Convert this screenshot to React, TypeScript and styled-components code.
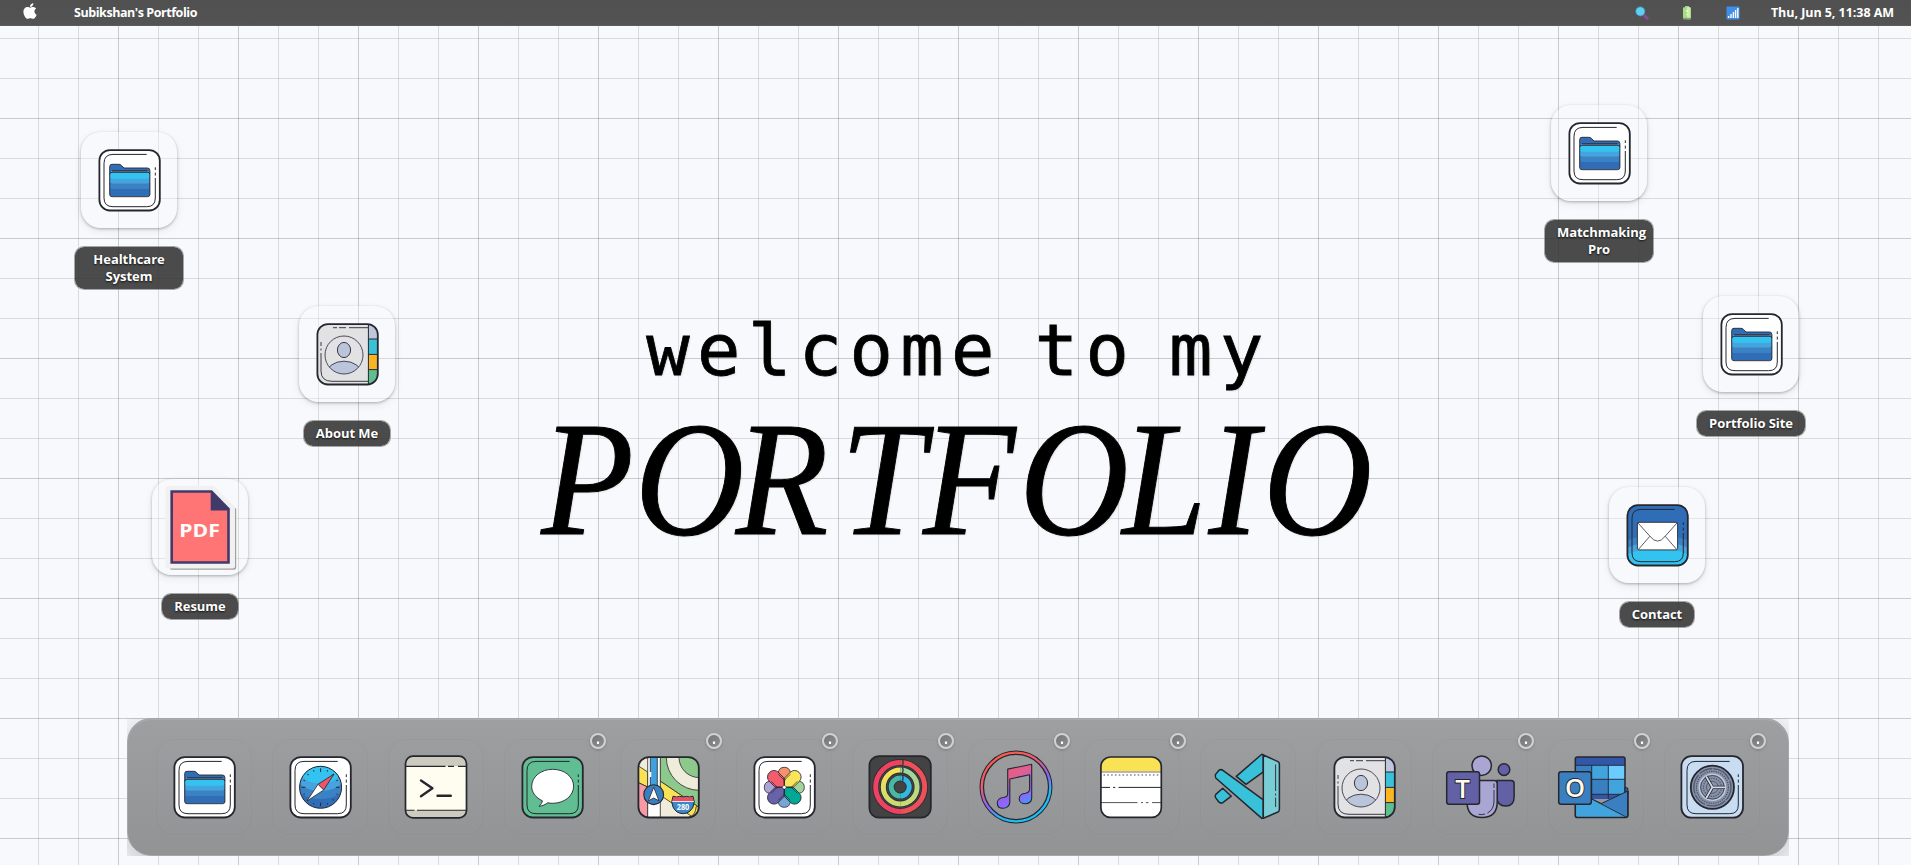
import React from "react";
import styled, { createGlobalStyle } from "styled-components";
import { FaApple } from "react-icons/fa";

const INK = "#26262f";

const GlobalStyle = createGlobalStyle`
  * { box-sizing: border-box; }
  body { margin: 0; overflow: hidden; }
`;

const Page = styled.div`
  display: flex;
  flex-direction: column;
  height: 100vh;
  min-height: 865px;
  font-family: "Open Sans", "Noto Sans", sans-serif;
  background-color: #f8f9fc;
  background-image:
    linear-gradient(rgba(0, 0, 0, 0.08) 1px, transparent 1px),
    linear-gradient(90deg, rgba(0, 0, 0, 0.08) 1px, transparent 1px),
    linear-gradient(rgba(0, 0, 0, 0.12) 1px, transparent 1px),
    linear-gradient(90deg, rgba(0, 0, 0, 0.12) 1px, transparent 1px);
  background-size: 120px 120px, 120px 120px, 40px 40px, 40px 40px;
  background-position: -2px -2px;
`;

const MenuBar = styled.header`
  display: flex;
  align-items: center;
  justify-content: space-between;
  height: 26px;
  padding: 1px 17px 0 22px;
  color: #fff;
  font-size: 12.5px;
  font-weight: 700;
  background: linear-gradient(#505050, #525352);
  border-bottom: 1px solid #5c5d5d;
`;

const MenuGroup = styled.div<{ $gap: number }>`
  display: flex;
  align-items: center;
  gap: ${(p) => p.$gap}px;
`;

const MenuText = styled.span<{ $spacing: number }>`
  letter-spacing: ${(p) => p.$spacing}px;
  white-space: nowrap;
  line-height: 18px;
`;

const AppleMark = styled(FaApple)`
  display: block;
  width: 16px;
  height: 18px;
  margin: -5px -1px 0 0;
`;

const StatusIcon = styled.svg`
  display: block;
  width: 14px;
  height: 14px;
`;

const Desktop = styled.main`
  position: relative;
  flex: 1;
  display: flex;
  flex-direction: column;
  align-items: center;
  padding-top: 279px;
`;

const Greeting = styled.p`
  margin: 0;
  padding-left: 6px;
  height: 90px;
  line-height: 90px;
  font-family: "DejaVu Sans Mono", monospace;
  font-size: 72px;
  letter-spacing: 7.45px;
  word-spacing: -18px;
  white-space: nowrap;
  color: #000;
  -webkit-text-stroke: 0.8px #000;
  text-shadow: 1px 1px 2px rgba(0, 0, 0, 0.12);
`;

const Headline = styled.h1`
  margin: 14px 0 0;
  padding-left: 2px;
  height: 140px;
  line-height: 140px;
  font-family: "Liberation Serif", serif;
  font-style: italic;
  font-weight: 400;
  font-size: 163px;
  white-space: nowrap;
  color: #000;
  transform: scaleX(0.93);
  -webkit-text-stroke: 1px #000;
  text-shadow: 1px 1px 2px rgba(0, 0, 0, 0.12);
`;

const Letter = styled.span<{ $after: number }>`
  letter-spacing: ${(p) => p.$after}px;
`;

const Shortcut = styled.div<{ $x: number; $y: number }>`
  position: absolute;
  left: ${(p) => p.$x}px;
  top: ${(p) => p.$y}px;
  width: 110px;
  display: flex;
  flex-direction: column;
  align-items: center;
  gap: 18px;
`;

const ShortcutTile = styled.div`
  width: 96px;
  height: 96px;
  border-radius: 20px;
  background: rgba(248, 249, 252, 0.35);
  box-shadow: 0 1px 3px rgba(0, 0, 0, 0.28), 0 3px 10px rgba(0, 0, 0, 0.07);
`;

const ShortcutLabel = styled.div`
  max-width: 110px;
  padding: 4px 12px;
  border: 1px solid rgba(110, 110, 110, 0.6);
  border-radius: 10px;
  background: rgba(50, 50, 50, 0.88);
  color: #fff;
  font-size: 13px;
  font-weight: 700;
  line-height: 17px;
  text-align: center;
  letter-spacing: -0.05px;
  text-shadow: 0 1px 2px rgba(0, 0, 0, 0.8);
  background-clip: padding-box;
`;

const DockFrame = styled.footer`
  align-self: flex-start;
  margin: 0 0 9px 127px;
  overflow: hidden;
`;

const DockBar = styled.div`
  display: flex;
  gap: 20px;
  padding: 20px 28px;
  border: 1px solid #a5a6a7;
  border-radius: 24px;
  background: linear-gradient(#9e9fa0, #929394);
  box-shadow: 0 8px 32px rgba(0, 0, 0, 0.25), inset 0 1px 0 rgba(255, 255, 255, 0.12);
`;

const DockItem = styled.div`
  position: relative;
  width: 96px;
  height: 96px;
  border-radius: 18px;
  box-shadow: inset 0 0 0 1px rgba(0, 0, 0, 0.025);
`;

const Badge = styled.span`
  position: absolute;
  top: -6px;
  right: -6px;
  width: 16px;
  height: 16px;
  border: 2px solid #d0d1d2;
  border-radius: 50%;
  background: radial-gradient(circle at 50% 64%, #fff 0 1px, transparent 1.6px),
    linear-gradient(135deg, #747576, #8f9091);
  box-shadow: 0 1px 3px rgba(0, 0, 0, 0.2);
`;

const Glyph = styled.svg`
  display: block;
  width: 96px;
  height: 96px;
  overflow: visible;
`;

const Plate = ({ fill }: { fill: string }) => (
  <g>
    <rect x="18.4" y="18.1" width="60.4" height="60.4" rx="10.5" fill={fill} stroke={INK} strokeWidth="1.8" />
    <path
      d="M65.7 22.4H32Q23 22.4 23 31.4V66Q23 74.7 32 74.7H65.7Q74.3 74.7 74.3 66V46M74.3 43.6V40.6M74.3 38V35.3"
      fill="none"
      stroke={INK}
      strokeWidth="1"
    />
  </g>
);

const FolderIcon = () => (
  <Glyph viewBox="0 0 96 96">
    <Plate fill="#fff" />
    <path d="M28.8 63V34.5Q28.8 32.3 31 32.3H37.5Q39.5 32.3 40.5 33.4L43 36H66.5Q68.8 36 68.8 38.5V63Z" fill="#2f6eb7" />
    <path d="M30 40.4V39.3H67.6V40.4" fill="#a8a6aa" />
    <rect x="28.8" y="40" width="40" height="24.6" rx="2" fill="#2f6eb7" />
    <path d="M28.8 52H68.8V54.5Q68.8 57 66 57H31.6Q28.8 57 28.8 54.5Z" fill="#3b82c4" />
    <path d="M28.8 46H68.8V49.3Q68.8 51.8 66 51.8H31.6Q28.8 51.8 28.8 49.3Z" fill="#45a4dd" />
    <path d="M28.8 40.5H68.8V44.3Q68.8 46.8 66 46.8H31.6Q28.8 46.8 28.8 44.3Z" fill="#33c3f1" />
    <path
      d="M28.7 62.5V34.5Q28.7 32.3 31 32.3H37.5Q39.5 32.3 40.5 33.4L43 36H66.5Q68.9 36 68.9 38.5V62.5Q68.9 64.7 66.7 64.7H31Q28.7 64.7 28.7 62.5ZM29 42Q29 40.2 31 40.2H66.6Q68.8 40.2 68.8 42M31 38.8H66.5"
      fill="none"
      stroke={INK}
      strokeWidth=".9"
    />
  </Glyph>
);

const SafariIcon = () => (
  <Glyph viewBox="0 0 96 96">
    <clipPath id="compass"><circle cx="48.6" cy="48.3" r="21" /></clipPath>
    <Plate fill="#fff" />
    <g clipPath="url(#compass)">
      <rect x="26" y="26" width="46" height="46" fill="#2f6eb7" />
      <ellipse cx="48.6" cy="42" rx="27" ry="18" fill="#3b82c4" />
      <ellipse cx="48.6" cy="36" rx="25" ry="16" fill="#45a4dd" />
      <ellipse cx="48.6" cy="31" rx="21" ry="13.5" fill="#33c3f1" />
    </g>
    <circle cx="48.6" cy="48.3" r="21" fill="none" stroke={INK} strokeWidth="1" />
    {Array.from({ length: 16 }, (_, i) => (
      <path key={i} d={i % 4 ? "M48.6 29.8V31.2" : "M48.6 29.3V33"} stroke={INK} strokeWidth="1" transform={`rotate(${i * 22.5} 48.6 48.3)`} />
    ))}
    <path d="M62 35L46 45.3L51.7 51Z" fill="#ef5466" stroke={INK} strokeWidth=".8" strokeLinejoin="round" />
    <path d="M35 62L46 45.3L51.7 51Z" fill="#fff" stroke={INK} strokeWidth=".8" strokeLinejoin="round" />
  </Glyph>
);

const TerminalIcon = () => (
  <Glyph viewBox="0 0 96 96">
    <clipPath id="term"><rect x="17.5" y="17.2" width="61" height="61.7" rx="7.5" /></clipPath>
    <g clipPath="url(#term)">
      <rect x="17" y="17" width="62" height="63" fill="#fffdf0" />
      <path d="M17 17H79V27.3H17ZM17 71.3H79V80H17Z" fill="#cdcbbf" />
      <path d="M17 27.4H57.5M60 27.4H66M70 27.4H79M17 71.3H26.5M29 71.3H79" stroke={INK} strokeWidth="1.1" />
    </g>
    <rect x="17.5" y="17.2" width="61" height="61.7" rx="7.5" fill="none" stroke={INK} strokeWidth="1.7" />
    <path d="M33 41.5L44.4 49.3L33 57.2M49.5 56.8H62.8" fill="none" stroke={INK} strokeWidth="2.4" strokeLinecap="round" strokeLinejoin="round" />
  </Glyph>
);

const MessagesIcon = () => (
  <Glyph viewBox="0 0 96 96">
    <Plate fill="#61be92" />
    <path
      d="M48.7 30.3C60.4 30.3 69.6 37.8 69.6 47.3S60.4 64.3 48.7 64.3C47 64.3 45.3 64.1 43.8 63.8C41.5 65.6 38.5 66.8 35 67.3C37 65.5 38.3 63.3 38.4 61.8C31.8 58.8 27.7 53.5 27.7 47.3C27.7 37.8 37 30.3 48.7 30.3Z"
      fill="#fff"
      stroke={INK}
      strokeWidth=".9"
      strokeLinejoin="round"
    />
  </Glyph>
);

const MapsIcon = () => (
  <Glyph viewBox="0 0 96 96">
    <clipPath id="map"><rect x="18.4" y="18.1" width="60.4" height="60.4" rx="10.5" /></clipPath>
    <g clipPath="url(#map)" stroke={INK} strokeWidth=".8">
      <rect x="18" y="18" width="62" height="62" fill="#efecdb" stroke="none" />
      <path d="M40 17H80V69L40 42Z" fill="#8dc98a" />
      <circle cx="79.3" cy="18.3" r="33" fill="#efecdb" />
      <circle cx="79.3" cy="18.3" r="20.3" fill="#8dc98a" />
      <path d="M40 42L80 69V83L40 56Z" fill="#f9e355" />
      <path d="M62 80L70 78Q76 75 76 68L82 66V80Z" fill="#f9e355" />
      <path d="M17 26L27.7 33V48L17 43Z" fill="#f9e355" />
      <path d="M17 43L27.7 48V80H17Z" fill="#f79aa4" />
      <path d="M27.7 17H40.3V80H27.7Z" fill="#fff" />
      <path d="M30.3 17H37.3V52H30.3Z" fill="#41a1dc" />
      <path d="M30.3 33V38" stroke="#fff" strokeWidth="2" />
    </g>
    <circle cx="33.7" cy="55.7" r="9.9" fill="#3980c1" stroke={INK} strokeWidth="1.1" />
    <path d="M33.7 48.3L39 61.8L33.7 59L28.4 61.8Z" fill="#fff" stroke={INK} strokeWidth=".8" />
    <path d="M53 57.2Q57 58.8 59.5 57.3Q63 58.8 66.5 57.3Q69 58.8 73 57.2Q75.5 63 73 68Q70 74.4 63 74.7Q56 74.4 53 68Q50.5 63 53 57.2Z" fill="#3b87c8" stroke={INK} strokeWidth="1" />
    <path d="M53.3 57.7Q57 59.2 59.5 57.7Q63 59.2 66.5 57.7Q69 59.2 72.7 57.7L73.7 62.4H52.3Z" fill="#ef4c62" />
    <path d="M52.2 62.5H73.8" stroke="#fff" strokeWidth=".8" />
    <text x="63" y="70.8" fontSize="8" fontWeight="700" textAnchor="middle" fill="#fff" textLength="12.5" lengthAdjust="spacingAndGlyphs">280</text>
    <rect x="18.4" y="18.1" width="60.4" height="60.4" rx="10.5" fill="none" stroke={INK} strokeWidth="1.8" />
  </Glyph>
);

const petals = ["#f7926f", "#f9e45c", "#a1d59d", "#00a896", "#77a5d8", "#6862ab", "#aaa5d5", "#f25c6c"];

const PhotosIcon = () => (
  <Glyph viewBox="0 0 96 96">
    <Plate fill="#fff" />
    {[0, 2, 4, 6, 1, 3, 5, 7].map((i) => (
      <path
        key={i}
        d={i % 2 ? "M0 0L-6.4 -7V-15A6.4 6 0 0 1 6.4 -15V-7Z" : "M0 0L-6 -6V-15A6.1 6.1 0 0 1 6 -15V-6Z"}
        fill={petals[i]}
        stroke={INK}
        strokeWidth=".8"
        transform={`translate(48.3 48.3) rotate(${i * 45})`}
      />
    ))}
    {[0, 90, 180, 270].map((a) => (
      <path key={a} d="M0 0V-7L-6 -13M0 -7L6 -13" fill="none" stroke={INK} strokeWidth=".7" transform={`translate(48.3 48.3) rotate(${a})`} />
    ))}
    <circle cx="48.3" cy="48.3" r="1.8" fill="#fff" stroke={INK} strokeWidth=".5" />
  </Glyph>
);

const Ring = ({ r, left, right }: { r: number; left: string; right: string }) => (
  <g fill="none">
    <circle cx="48.2" cy="48" r={r} stroke="#2b2b33" strokeWidth="6.6" />
    <path d={`M48.2 ${48 - r}A${r} ${r} 0 0 0 48.2 ${48 + r}`} stroke={left} strokeWidth="5" />
    <path d={`M48.2 ${48 - r}A${r} ${r} 0 0 1 48.2 ${48 + r}`} stroke={right} strokeWidth="5" />
    <path d={`M50.6 ${45.2 - r}Q51.6 ${48 - r} 50.6 ${50.8 - r}`} stroke="#2b2b33" strokeWidth="1.2" />
  </g>
);

const ActivityIcon = () => (
  <Glyph viewBox="0 0 96 96">
    <linearGradient id="yl" x1="0" y1="0" x2="0" y2="1"><stop stopColor="#f7e156" /><stop offset="1" stopColor="#c9dc72" /></linearGradient>
    <linearGradient id="yr" x1="0" y1="0" x2="0" y2="1"><stop stopColor="#9fd39c" /><stop offset="1" stopColor="#c9dc72" /></linearGradient>
    <rect x="17.4" y="17.1" width="61.4" height="61.6" rx="9.5" fill="#434343" stroke={INK} strokeWidth="1.8" />
    <Ring r={24.5} left="#ee4263" right="#ec5159" />
    <Ring r={16.9} left="url(#yl)" right="url(#yr)" />
    <Ring r={9} left="#46b8a4" right="#33b8df" />
  </Glyph>
);

const MusicIcon = () => (
  <Glyph viewBox="0 0 96 96">
    <linearGradient id="ring" gradientUnits="userSpaceOnUse" x1="30" y1="14" x2="66" y2="82">
      <stop stopColor="#ff5b45" /><stop offset=".3" stopColor="#f05a70" /><stop offset=".55" stopColor="#8f62ff" /><stop offset=".75" stopColor="#25b9f5" /><stop offset="1" stopColor="#14c2f5" />
    </linearGradient>
    <linearGradient id="note" gradientUnits="userSpaceOnUse" x1="44" y1="28" x2="62" y2="64">
      <stop stopColor="#e95c80" /><stop offset=".25" stopColor="#df5f96" /><stop offset=".5" stopColor="#8f62e8" /><stop offset=".75" stopColor="#8f66ff" /><stop offset="1" stopColor="#3e9df5" />
    </linearGradient>
    <circle cx="48" cy="48" r="34.2" fill="none" stroke={INK} strokeWidth="4.6" />
    <circle cx="48" cy="48" r="34.3" fill="none" stroke="url(#ring)" strokeWidth="2.3" />
    <path
      d="M39.7 30.1L63.7 25.3V59.3C63.7 62.4 60.8 64.8 57.3 64.8S51.2 62.8 51.2 59.7S54 54.4 57.4 54.2C59.5 54 61.5 52.5 61.6 50V35.7L41.8 40V63.3C41.8 66.9 38.7 69.3 35 69.3S29.3 67 29.3 63.9S32 58.7 35.4 58.5C37.7 58.3 39.7 57 39.7 54.5Z"
      fill="url(#note)"
      stroke={INK}
      strokeWidth="1.1"
      strokeLinejoin="round"
    />
  </Glyph>
);

const NotesIcon = () => (
  <Glyph viewBox="0 0 96 96">
    <clipPath id="pad"><rect x="16.9" y="18" width="60.4" height="60.4" rx="9.5" /></clipPath>
    <g clipPath="url(#pad)">
      <rect x="16" y="17" width="62" height="62" fill="#fff" />
      <rect x="16" y="17" width="62" height="15.4" fill="#f9e355" />
      <path d="M16 33H78" stroke="#77777a" strokeWidth="1.2" />
      <path d="M19.5 36H76" stroke="#88888c" strokeWidth="1.6" strokeDasharray="1.6 2.2" />
      <path d="M16 48.4H26M29 48.4H31.3M34.5 48.4H78" stroke={INK} strokeWidth="1" />
      <path d="M16 63.6H53.5M57 63.6H59M62 63.6H64.5M68 63.6H78" stroke="#55555c" strokeWidth="1" />
    </g>
    <rect x="16.9" y="18" width="60.4" height="60.4" rx="9.5" fill="none" stroke={INK} strokeWidth="1.7" />
  </Glyph>
);

const CodeIcon = () => (
  <Glyph viewBox="0 0 96 96">
    <g stroke={INK} strokeWidth="1.5" strokeLinejoin="round" fill="#39c1da">
      <path d="M61.8 15.2L36.3 37.4L46 45.3L63.3 32.8V16Z" />
      <path d="M22.7 49.3L15.8 55.4Q14.7 57 15.6 58.6L19 63.2Q21 64.8 22.8 63.6L31.3 57.2Z" />
      <path d="M22.9 31.3Q21 30 19 31.2L15.6 35.4Q14.6 37.5 16 39.2L61.8 79.4L63.3 79V60.8Z" />
      <path d="M63.3 16L78 22.6Q79.4 23.4 79.4 25V70.6Q79.4 72.2 78 73L63.3 79.3Z" fill="#79cdd5" />
    </g>
    <path d="M75.6 25.5V52M75.6 54.5V56.5M75.6 58.5V68" stroke={INK} strokeWidth=".9" />
  </Glyph>
);

const ContactsIcon = () => (
  <Glyph viewBox="0 0 96 96">
    <clipPath id="book"><rect x="18.4" y="18.1" width="60.4" height="60.4" rx="10.5" /></clipPath>
    <clipPath id="face"><circle cx="45" cy="49" r="19" /></clipPath>
    <g clipPath="url(#book)">
      <rect x="18" y="17" width="62" height="63" fill="#e2e2e4" />
      <path d="M69.4 17H80V33H69.4Z" fill="#bfc7dc" />
      <path d="M69.4 33H80V48.4H69.4Z" fill="#39c1da" />
      <path d="M69.4 48.4H80V63.6H69.4Z" fill="#fbb423" />
      <path d="M69.4 63.6H80V80H69.4Z" fill="#5fbe90" />
      <path d="M69.4 17V80M69.4 33H80M69.4 48.4H80M69.4 63.6H80" stroke={INK} strokeWidth="1" />
    </g>
    <g clipPath="url(#face)"><ellipse cx="45" cy="68.5" rx="18" ry="13.3" fill="#bac4da" stroke={INK} strokeWidth=".8" /></g>
    <circle cx="45" cy="49" r="19" fill="none" stroke={INK} strokeWidth=".8" />
    <ellipse cx="45" cy="44" rx="6.6" ry="7.6" fill="#bac4da" stroke={INK} strokeWidth=".9" />
    <path d="M34 21.7H38M40 21.7H47M50 21.7H69M22 36V40M22 42.5V44.5M22 47V65Q22 75.3 33 75.3H69" fill="none" stroke={INK} strokeWidth=".9" />
    <rect x="18.4" y="18.1" width="60.4" height="60.4" rx="10.5" fill="none" stroke={INK} strokeWidth="1.8" />
  </Glyph>
);

const LogoLetter = styled.text`
  font-family: "Open Sans", sans-serif;
  font-weight: 600;
  fill: #fdfbee;
  stroke: ${INK};
  stroke-width: 1.8px;
  paint-order: stroke;
  text-anchor: middle;
`;

const TeamsIcon = () => (
  <Glyph viewBox="0 0 96 96">
    <g stroke={INK} strokeWidth="1.5">
      <path d="M65 41.4H79Q82.1 41.4 82.1 44.4V58Q82.1 67 73.7 67Q65 67 65 58Z" fill="#6361a6" />
      <circle cx="72" cy="30.6" r="5.8" fill="#6361a6" />
      <path d="M35 41.4H62Q65.2 41.4 65.2 44.5V63Q65.2 78.5 50 78.5Q35 78.5 35 63Z" fill="#aaa6d3" />
      <circle cx="49.7" cy="26.7" r="9.7" fill="#aaa6d3" />
      <rect x="14.7" y="32.8" width="32.8" height="32.4" rx="2.5" fill="#6361a6" />
    </g>
    <path d="M62 44.5V49M62 51V62Q62 70.5 55.5 74M53 75Q50 76.2 46.5 75.3" fill="none" stroke={INK} strokeWidth=".9" />
    <LogoLetter x="30.7" y="58.5" fontSize="26">T</LogoLetter>
  </Glyph>
);

const OutlookIcon = () => (
  <Glyph viewBox="0 0 96 96">
    <path d="M27.3 60V20Q27.3 17.9 29.4 17.9H75Q77 17.9 77 20V60Z" fill="#3257a8" />
    <path d="M27.3 26.3H43.7V55.3H27.3ZM43.7 40.3H60.3V55.3H43.7Z" fill="#3a80c1" />
    <path d="M43.7 26.3H60.3V40.3H43.7ZM60.3 40.3H77V55.3H60.3Z" fill="#42a4dd" />
    <path d="M60.3 26.3H77V40.3H60.3Z" fill="#6ccbff" />
    <path d="M27.3 26.3H77M43.7 26.3V60M60.3 26.3V60M43.7 40.3H77M43.7 55.3H73" stroke={INK} strokeWidth=".9" />
    <path d="M27.3 60V20Q27.3 17.9 29.4 17.9H75Q77 17.9 77 20V60" fill="none" stroke={INK} strokeWidth="1.5" />
    <path d="M77 48.6H78.5Q79.9 48.6 79.9 50V55H77Z" fill="#3257a8" stroke={INK} />
    <path d="M43.7 60L53.4 64.5L79.9 52V76.5Q79.9 78.5 77.8 78.5H60Z" fill="#3a80c1" stroke={INK} strokeWidth="1" />
    <path d="M27.3 55L43.7 60L79 78.5H29.4Q27.3 78.5 27.3 76.4Z" fill="#42a4dd" stroke={INK} strokeWidth=".9" />
    <path d="M27.3 64V76.4Q27.3 78.5 29.4 78.5H77.8Q79.9 78.5 79.9 76.5V52" fill="none" stroke={INK} strokeWidth="1.5" />
    <rect x="10.7" y="32.8" width="32.6" height="32.4" rx="2.5" fill="#3a80c1" stroke={INK} strokeWidth="1.5" />
    <LogoLetter x="27" y="58.3" fontSize="25.5">O</LogoLetter>
  </Glyph>
);

const SettingsIcon = () => (
  <Glyph viewBox="0 0 96 96">
    <rect x="17.4" y="17.1" width="61.6" height="61.6" rx="10" fill="#c8ddf2" stroke={INK} strokeWidth="1.8" />
    <path d="M65.7 22.4H32Q23 22.4 23 31.4V66Q23 74.7 32 74.7H65.7Q74.3 74.7 74.3 66V46M74.3 43.6V40.6M74.3 38V35.3" fill="none" stroke={INK} strokeWidth="1" />
    <g fill="none" stroke={INK}>
      <circle cx="48.4" cy="48.3" r="21.6" fill="#8793ab" strokeWidth="1.8" />
      <circle cx="48.4" cy="48.3" r="18.6" stroke="#555b6c" strokeWidth="1.4" strokeDasharray="14 1 20 1.5" />
      <circle cx="48.4" cy="48.3" r="16" stroke="#4b5060" strokeWidth="1.2" strokeDasharray="1.3 1" />
      <circle cx="48.4" cy="48.3" r="13" stroke="#c2cad8" strokeWidth="1.6" />
      <circle cx="48.4" cy="48.3" r="11.8" strokeWidth=".7" />
      <circle cx="48.4" cy="48.3" r="9" stroke="#555b6c" strokeWidth="1.3" strokeDasharray="1.4 1" />
      <circle cx="48.4" cy="48.3" r="6" stroke="#555b6c" strokeWidth="1" />
      <path d="M48.4 48.3H61M48.4 48.3L42.1 37.4M48.4 48.3L42.1 59.2" strokeWidth="3.3" />
      <path d="M48.4 48.3H61M48.4 48.3L42.1 37.4M48.4 48.3L42.1 59.2" stroke="#d3dbe8" strokeWidth="1.8" />
    </g>
  </Glyph>
);

const MailIcon = () => (
  <Glyph viewBox="0 0 96 96">
    <clipPath id="mail"><rect x="18.4" y="18.1" width="60.4" height="60.4" rx="10.5" /></clipPath>
    <g clipPath="url(#mail)">
      <rect x="18" y="17" width="62" height="63" fill="#2f6eb7" />
      <ellipse cx="48.6" cy="68" rx="44" ry="20" fill="#3b82c4" />
      <ellipse cx="48.6" cy="72" rx="40" ry="17" fill="#45a4dd" />
      <ellipse cx="48.6" cy="76" rx="38" ry="14" fill="#33c3f1" />
    </g>
    <Plate fill="none" />
    <rect x="28.4" y="35.3" width="40.2" height="27.6" rx="1.6" fill="#fff" stroke={INK} strokeWidth=".9" />
    <path d="M29 36L40.9 49.2L29.5 62.3M68 36L56.2 49.2L67.5 62.3M40.9 49.2Q48.6 59 56.2 49.2" fill="none" stroke="#4a4a52" strokeWidth=".9" />
  </Glyph>
);

const PdfIcon = () => (
  <Glyph viewBox="0 0 96 96">
    <path d="M16.7 9.5H62L83 28.5V87Q83 89.5 80.5 89.5H19Q17 89.5 16.7 88Z" fill="#8c8c8c" opacity=".8" transform="translate(1.2 1.2)" />
    <path d="M16 7H62L83 28.5V87Q83 89.5 80.5 89.5H16Q13.6 89.5 13.6 87V9.5Q13.6 7 16 7Z" fill="#f1f1f2" />
    <path d="M18.4 11.2H60L77.8 29.5V84.7H18.4Z" fill="#403a6b" />
    <path d="M21 13.8H58.7V31.6H75.2V82.2H21Z" fill="#ff7474" />
    <text x="47.6" y="58.2" fontSize="18" fontWeight="700" textAnchor="middle" fill="#fff" textLength="40.5" lengthAdjust="spacingAndGlyphs">PDF</text>
  </Glyph>
);

const shortcuts = [
  { label: "Healthcare System", x: 74, y: 132, Icon: FolderIcon },
  { label: "About Me", x: 292, y: 306, Icon: ContactsIcon },
  { label: "Resume", x: 145, y: 479, Icon: PdfIcon },
  { label: "Matchmaking Pro", x: 1544, y: 105, Icon: FolderIcon },
  { label: "Portfolio Site", x: 1696, y: 296, Icon: FolderIcon },
  { label: "Contact", x: 1602, y: 487, Icon: MailIcon },
];

const MENU_HEIGHT = 26;

const dock = [
  { name: "finder", Icon: FolderIcon },
  { name: "safari", Icon: SafariIcon },
  { name: "terminal", Icon: TerminalIcon },
  { name: "messages", Icon: MessagesIcon, badge: true },
  { name: "maps", Icon: MapsIcon, badge: true },
  { name: "photos", Icon: PhotosIcon, badge: true },
  { name: "activity", Icon: ActivityIcon, badge: true },
  { name: "music", Icon: MusicIcon, badge: true },
  { name: "notes", Icon: NotesIcon, badge: true },
  { name: "code", Icon: CodeIcon },
  { name: "contacts", Icon: ContactsIcon },
  { name: "teams", Icon: TeamsIcon, badge: true },
  { name: "outlook", Icon: OutlookIcon, badge: true },
  { name: "settings", Icon: SettingsIcon, badge: true },
];

// Each letter with the kerning that follows it.
const headline: [string, number][] = [
  ["P", 1], ["O", -9], ["R", 13], ["T", -2], ["F", 4], ["O", -7], ["L", 2], ["I", 4], ["O", 0],
];

export default function App() {
  return (
    <Page>
      <GlobalStyle />
      <MenuBar>
        <MenuGroup $gap={37}>
          <AppleMark />
          <MenuText $spacing={-0.44}>Subikshan's Portfolio</MenuText>
        </MenuGroup>
        <MenuGroup $gap={31.3}>
          <StatusIcon viewBox="0 0 14 14">
            <path d="M9 9.2L12.3 12.4" stroke="#8a4a95" strokeWidth="2.8" strokeLinecap="round" />
            <circle cx="5.3" cy="5.4" r="4.5" fill="#5fd0f0" stroke="#3f9fd0" strokeWidth=".8" />
          </StatusIcon>
          <StatusIcon viewBox="0 0 14 14">
            <rect x="5" y="0" width="4" height="2" fill="#b7b9b8" />
            <rect x="3" y="1.2" width="8" height="12" rx="1" fill="#a5dd84" />
            <path d="M7 1.2H10V13.2H7Z" fill="#cdf0a0" />
            <path d="M3 11.8H11V13.2H3Z" fill="#8a9a88" />
            <path d="M7 4V6M7 8V9" stroke="#fff" strokeWidth="1.2" />
          </StatusIcon>
          <StatusIcon viewBox="0 0 14 14">
            <rect x=".5" y=".5" width="13" height="13" rx="1" fill="#3f8ee8" />
            <path d="M2.6 12V10M5 12V8M7.4 12V6M9.6 12V4M11.8 12V2" stroke="#fff" strokeWidth="1.4" />
          </StatusIcon>
          <MenuText $spacing={-0.05}>Thu, Jun 5, 11:38 AM</MenuText>
        </MenuGroup>
      </MenuBar>
      <Desktop>
        <Greeting>welcome to my</Greeting>
        <Headline>
          {headline.map(([ch, after], i) => (
            <Letter key={i} $after={after}>{ch}</Letter>
          ))}
        </Headline>
        {shortcuts.map(({ label, x, y, Icon }) => (
          <Shortcut key={label} $x={x} $y={y - MENU_HEIGHT}>
            <ShortcutTile><Icon /></ShortcutTile>
            <ShortcutLabel>{label}</ShortcutLabel>
          </Shortcut>
        ))}
      </Desktop>
      <DockFrame>
        <DockBar>
          {dock.map(({ name, Icon, badge }) => (
            <DockItem key={name}>
              <Icon />
              {badge && <Badge />}
            </DockItem>
          ))}
        </DockBar>
      </DockFrame>
    </Page>
  );
}
